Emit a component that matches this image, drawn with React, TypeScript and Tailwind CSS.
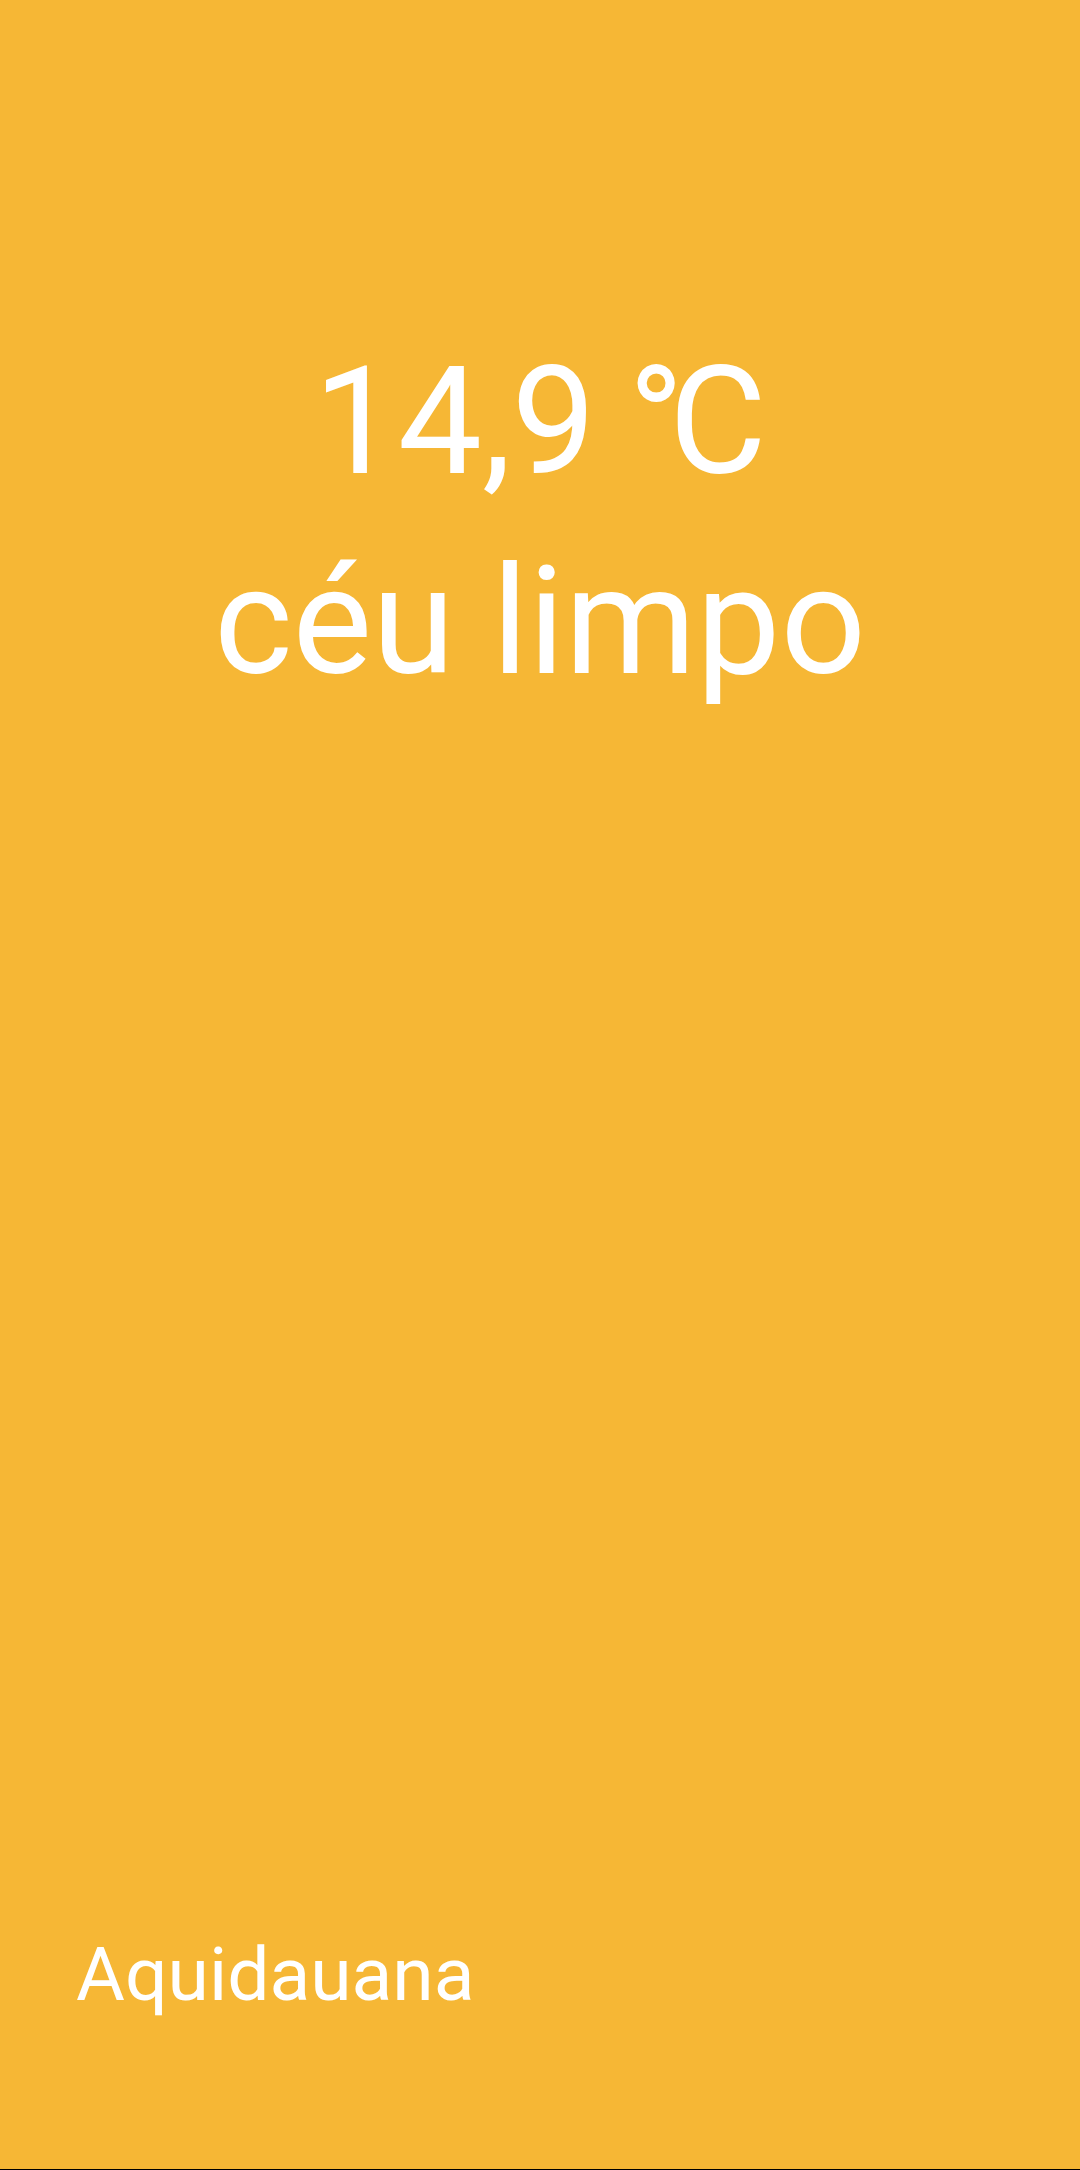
const WeatherScreen = () => {
  const temp = "14,9";
  const description = "céu limpo";
  const city = "Aquidauana";

  return (
    <div className="w-full bg-black font-[Roboto,sans-serif]">
      <div className="w-full h-[2169px] flex flex-col justify-between bg-[#f6b735] text-white">
        <div className="pt-[322px] flex flex-col items-center text-[150px] leading-[200px]">
          <span>
            {temp}
            <span className="ml-[32px] -mr-[15px]">°</span>C
          </span>
          <span>{description}</span>
        </div>
        <div className="pl-[76px] pb-[139px] text-[75px]">{city}</div>
      </div>
      <div className="h-px" />
    </div>
  );
};

export default function App() {
  return <WeatherScreen />;
}
